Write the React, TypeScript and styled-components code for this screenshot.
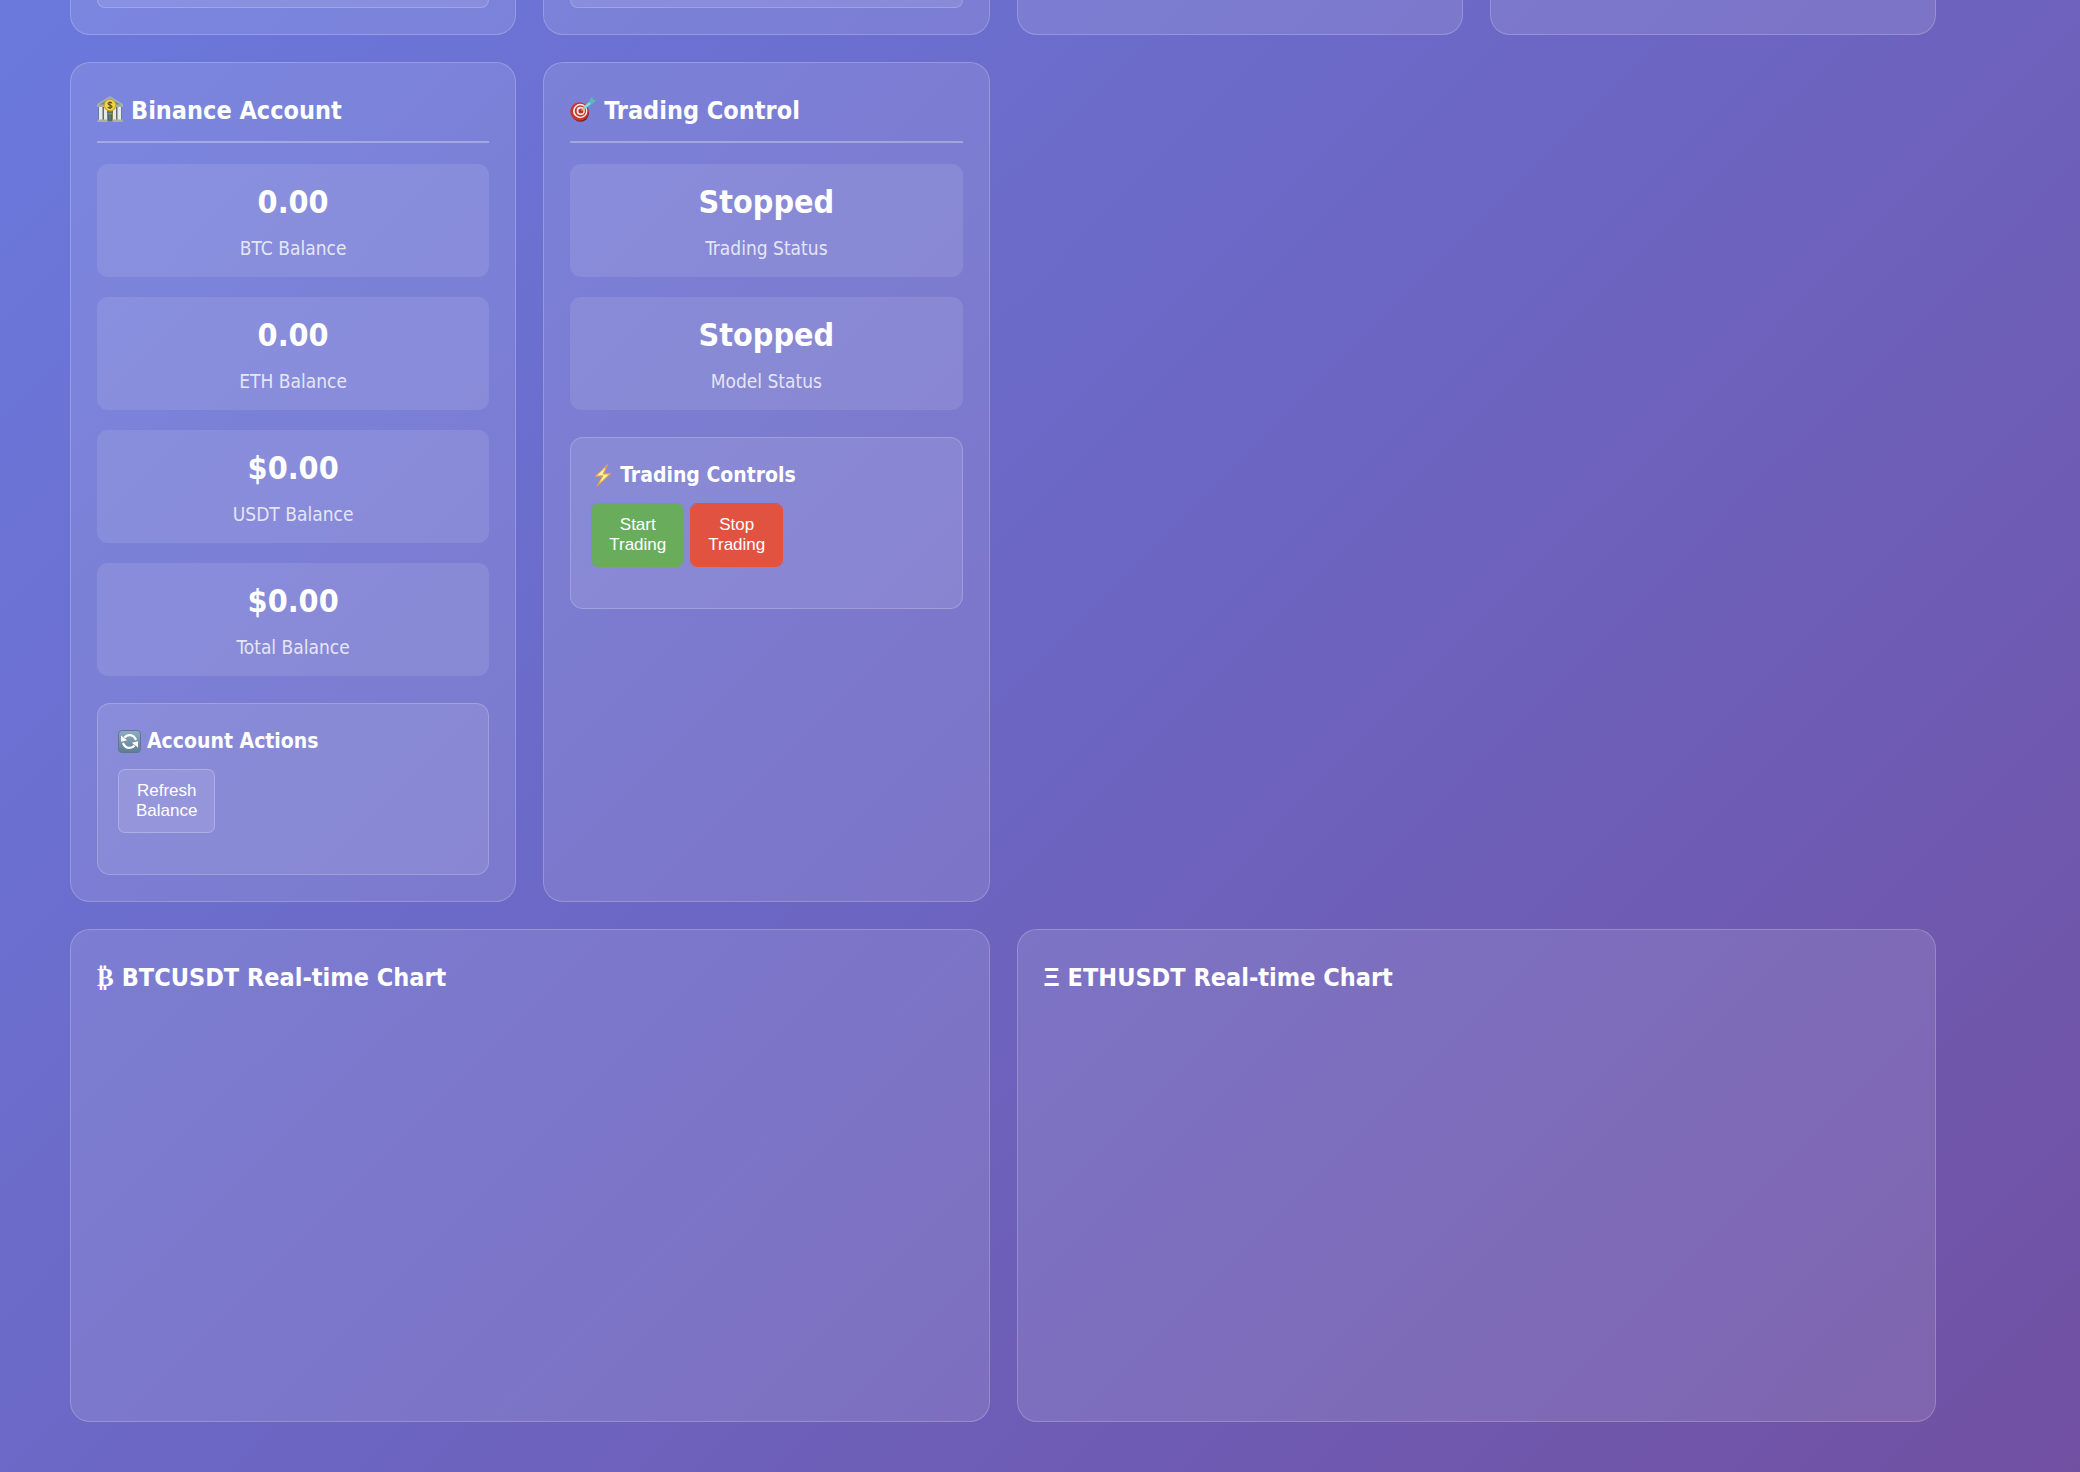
import React from "react";
import styled, { createGlobalStyle } from "styled-components";

const GlobalStyle = createGlobalStyle`
  * { box-sizing: border-box; }
  html { min-height: 100%; background: linear-gradient(135deg, #6b79dd 0%, #6c65c2 50%, #7150a2 100%); }
  body { margin: 0; color: #fff; font-family: Tahoma, "DejaVu Sans Condensed", "DejaVu Sans", sans-serif; }
  h2, h3, p { margin: 0; }
`;

const Dashboard = styled.main`
  display: grid;
  grid-template-columns: repeat(4, minmax(0, 1fr));
  gap: 27px;
  padding: 0 144px 51px 70px;
`;

const Card = styled.section`
  padding: 26px;
  border: 1px solid rgba(255, 255, 255, 0.2);
  border-radius: 20px;
  background: rgba(255, 255, 255, 0.11);
`;

const CardTail = styled(Card)`
  height: 35px;
  padding-top: 0;
  border-top: 0;
  border-radius: 0 0 20px 20px;
`;

const PanelTail = styled.div`
  height: 8px;
  border: 1px solid rgba(255, 255, 255, 0.2);
  border-top: 0;
  border-radius: 0 0 13px 13px;
  background: rgba(255, 255, 255, 0.1);
`;

const ChartCard = styled(Card)<{ $column: number }>`
  grid-column: ${(p) => p.$column} / span 2;
`;

const CardTitle = styled.h2<{ $ruled?: boolean }>`
  display: flex;
  align-items: flex-start;
  gap: 8px;
  margin-bottom: 21px;
  padding-top: 4px;
  padding-bottom: ${(p) => (p.$ruled ? "13px" : "0")};
  border-bottom: ${(p) => (p.$ruled ? "2px solid rgba(255, 255, 255, 0.3)" : "0")};
  font-size: 25px;
  line-height: 35px;

  svg { margin-top: 3px; }
`;

const Coin = styled.span<{ $serif?: boolean }>`
  font-family: ${(p) => (p.$serif ? '"Liberation Serif", "DejaVu Serif", serif' : '"Liberation Sans", sans-serif')};
`;

const Stats = styled.div`
  display: grid;
  gap: 20px;
`;

const Stat = styled.div`
  padding: 16px 20px 14px;
  border-radius: 11px;
  background: rgba(255, 255, 255, 0.1);
  text-align: center;
`;

const StatValue = styled.p`
  margin-bottom: 9px;
  font-size: 32px;
  font-weight: 700;
  line-height: 44px;
`;

const StatLabel = styled.p`
  color: rgba(255, 255, 255, 0.8);
  font-size: 19px;
  line-height: 30px;
`;

const Panel = styled.div`
  margin-top: 27px;
  padding: 20px;
  border: 1px solid rgba(255, 255, 255, 0.2);
  border-radius: 13px;
  background: rgba(255, 255, 255, 0.1);
`;

const PanelTitle = styled.h3`
  display: flex;
  align-items: center;
  gap: 6px;
  margin-bottom: 10px;
  font-size: 21px;
  line-height: 35px;
`;

const Actions = styled.div`
  display: flex;
  gap: 6px;
  margin-bottom: 21px;
`;

const tones = {
  plain: ["rgba(255, 255, 255, 0.1)", "rgba(255, 255, 255, 0.3)"],
  go: ["#69ad5c", "#69ad5c"],
  halt: ["#e15241", "#e15241"],
};

const ActionButton = styled.button<{ $tone: keyof typeof tones }>`
  width: min-content;
  padding: 11px 17px;
  border: 1px solid ${(p) => tones[p.$tone][1]};
  border-radius: 7px;
  background: ${(p) => tones[p.$tone][0]};
  background-clip: padding-box;
  color: #fff;
  font-family: "Liberation Sans", Arial, sans-serif;
  font-size: 17px;
  line-height: 20px;
  cursor: pointer;
`;

const ChartArea = styled.div`
  height: 379px;
`;

const Icon = styled.svg<{ $size: number }>`
  flex: none;
  width: ${(p) => p.$size}px;
  height: ${(p) => p.$size}px;
`;

const BankIcon = () => (
  <Icon $size={26} viewBox="0 0 26 26" aria-hidden="true">
    <path d="M0 8 13 0l13 8v3H0z" fill="#a3afa8" />
    <path d="M2.500 8.500 13 2.500l10.500 6z" fill="#78888a" />
    <rect x="1.500" y="11" width="23" height="13" fill="#5f6d72" />
    <path d="M2 11h3.500v13H2zM7 11h3v13H7zM16 11h3v13h-3zM20.500 11H24v13h-3.500z" fill="#e6eaeb" />
    <path d="M10.300 17h5.400v8h-5.400z" fill="#a78a35" />
    <path d="M11 18.300h1.600V25H11zM13.400 18.300H15V25h-1.600z" fill="#3c6889" />
    <path d="M.5 23.500h9.800V26H.5zM15.700 23.500h9.800V26h-9.800z" fill="#a9b49c" />
    <circle cx="13" cy="9.300" r="6.200" fill="#cda626" />
    <circle cx="13" cy="9" r="5.200" fill="#f0d545" />
    <path d="M15 7.300c-.5-1.500-4-1.500-4 .3 0 2 4 1.200 4 3.100 0 1.700-3.500 1.700-4.200.2M13 5.200v7.900" fill="none" stroke="#5d501a" strokeWidth="1.100" />
  </Icon>
);

const TargetIcon = () => (
  <Icon $size={26} viewBox="0 0 26 26" aria-hidden="true">
    <ellipse cx="10.500" cy="16.800" rx="8.500" ry="9" fill="#7f211f" />
    <circle cx="9.500" cy="15.500" r="9.200" fill="#c8352b" />
    <circle cx="10.200" cy="15" r="7.200" fill="#f7efed" />
    <circle cx="10.400" cy="15" r="5.700" fill="#c8352b" />
    <circle cx="10.700" cy="14.900" r="4.100" fill="#f7efed" />
    <circle cx="10.900" cy="14.900" r="2.500" fill="#b92f29" />
    <path d="m11.500 14.500 3.500-3" stroke="#dcb054" strokeWidth="1.600" />
    <path d="m14 12 7.500-6.200" stroke="#74dfdd" strokeWidth="2.800" />
    <path d="m19.500 6.500.8-4L22.500.8l.5 3 3 .4-1 1.600-3.500 2.700z" fill="#58bbb2" />
  </Icon>
);

const BoltIcon = () => (
  <Icon $size={23} viewBox="0 0 23 23" aria-hidden="true">
    <path d="M16.500.8 4.500 12.200l7.200-.4L6.300 21.800 19.500 9.600l-7.300.4z" fill="#fff3a0" stroke="#e5a23d" strokeWidth="1.100" strokeLinejoin="round" />
  </Icon>
);

const RefreshIcon = () => (
  <Icon $size={23} viewBox="0 0 23 23" aria-hidden="true">
    <defs>
      <linearGradient id="tile" x2="0" y2="1">
        <stop stopColor="#91adc2" />
        <stop offset="1" stopColor="#5f7c95" />
      </linearGradient>
    </defs>
    <rect x=".5" y=".5" width="22" height="22" rx="3.500" fill="url(#tile)" stroke="#5c7991" />
    <path d="M6.500 7.500c3-3.800 9.300-3.300 11.500 2.500M16.500 15.500c-3 3.800-9.300 3.300-11.500-2.500" fill="none" stroke="#fff" strokeWidth="2.200" />
    <path d="M3 5.500v6.300l6.200-1.600zM20 17.500v-6.300l-6.200 1.600z" fill="#fff" />
  </Icon>
);

type StatItem = { value: string; label: string };

const balances: StatItem[] = [
  { value: "0.00", label: "BTC Balance" },
  { value: "0.00", label: "ETH Balance" },
  { value: "$0.00", label: "USDT Balance" },
  { value: "$0.00", label: "Total Balance" },
];

const statuses: StatItem[] = [
  { value: "Stopped", label: "Trading Status" },
  { value: "Stopped", label: "Model Status" },
];

const StatList = ({ items }: { items: StatItem[] }) => (
  <Stats>
    {items.map((item) => (
      <Stat key={item.label}>
        <StatValue>{item.value}</StatValue>
        <StatLabel>{item.label}</StatLabel>
      </Stat>
    ))}
  </Stats>
);

export default function App() {
  return (
    <>
      <GlobalStyle />
      <Dashboard>
        <CardTail><PanelTail /></CardTail>
        <CardTail><PanelTail /></CardTail>
        <CardTail />
        <CardTail />
        <Card>
          <CardTitle $ruled><BankIcon />Binance Account</CardTitle>
          <StatList items={balances} />
          <Panel>
            <PanelTitle><RefreshIcon />Account Actions</PanelTitle>
            <Actions>
              <ActionButton type="button" $tone="plain">Refresh Balance</ActionButton>
            </Actions>
          </Panel>
        </Card>
        <Card>
          <CardTitle $ruled><TargetIcon />Trading Control</CardTitle>
          <StatList items={statuses} />
          <Panel>
            <PanelTitle><BoltIcon />Trading Controls</PanelTitle>
            <Actions>
              <ActionButton type="button" $tone="go">Start Trading</ActionButton>
              <ActionButton type="button" $tone="halt">Stop Trading</ActionButton>
            </Actions>
          </Panel>
        </Card>
        <ChartCard $column={1}>
          <CardTitle><Coin $serif>₿</Coin>BTCUSDT Real-time Chart</CardTitle>
          <ChartArea />
        </ChartCard>
        <ChartCard $column={3}>
          <CardTitle><Coin>Ξ</Coin>ETHUSDT Real-time Chart</CardTitle>
          <ChartArea />
        </ChartCard>
      </Dashboard>
    </>
  );
}
